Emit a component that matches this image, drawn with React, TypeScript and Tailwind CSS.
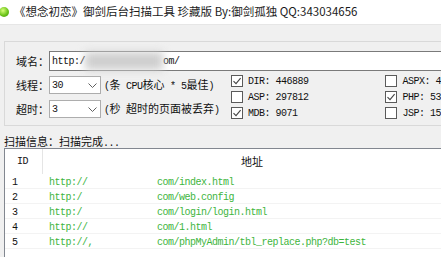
import React from "react";

const CJK = "font-['Noto_Sans_CJK_SC',sans-serif]";

function M({ children }: { children: React.ReactNode }) {
  return <span className="font-['Liberation_Mono',monospace] text-[10px] tracking-[-0.5px]">{children}</span>;
}

function Check({ checked }: { checked: boolean }) {
  return (
    <svg width="12" height="12" viewBox="0 0 12 12" className="shrink-0">
      <rect x="0.5" y="0.5" width="11" height="11" fill="#fff" stroke="#5a5a5a" />
      {checked && <path d="M2.5 6.2 L5 8.7 L9.6 3.2" fill="none" stroke="#444" strokeWidth="1.1" />}
    </svg>
  );
}

function Combo({ value }: { value: string }) {
  return (
    <div className="w-[52px] h-[18px] bg-white border border-[#adadad] flex items-center justify-between pl-[2px] pr-[3px]">
      <M>{value}</M>
      <svg width="9" height="5" viewBox="0 0 9 5">
        <polyline points="0.5,0.5 4.5,4.5 8.5,0.5" fill="none" stroke="#606060" />
      </svg>
    </div>
  );
}

function Opt({ checked, label }: { checked: boolean; label: string }) {
  return (
    <div className="h-[16px] flex items-center gap-[5px] whitespace-nowrap text-[#111]">
      <Check checked={checked} />
      <M>{label}</M>
    </div>
  );
}

const rows = [
  ["1", "http://", "com/index.html"],
  ["2", "http:/", "com/web.config"],
  ["3", "http:/", "com/login/login.html"],
  ["4", "http://", "com/1.html"],
  ["5", "http://,", "com/phpMyAdmin/tbl_replace.php?db=test"],
];

export default function App() {
  return (
    <div className={`w-[441px] h-[257px] overflow-hidden bg-[#f0f0f0] ${CJK} text-[11px] text-[#111]`}>
      {/* title bar */}
      <div className="h-[25px] bg-white border-b border-[#e6e6e6] flex items-center">
        <div className="w-[10px] h-[10px] -ml-[1px] rounded-full bg-[radial-gradient(circle_at_40%_35%,#d8ff7a,#6cc41a_55%,#3f8f0a)]" />
        <span className="ml-[5px] text-[11.5px] text-[#1a1a1a] whitespace-nowrap">
          《想念初恋》御剑后台扫描工具 珍藏版 By:御剑孤独 QQ:343034656
        </span>
      </div>

      {/* settings group */}
      <div className="mt-[16px] ml-[4px] w-[460px] h-[85px] border border-[#d9d9d9] pt-[9px]">
        <div className="flex items-center h-[20px] pl-[11px]">
          <span className="w-[33px]">域名：</span>
          <div className="flex-1 h-[20px] bg-white border border-[#7a7a7a] flex items-center pl-[2px]">
            <M>http:/</M>
            <span className="w-[78px] h-[18px] bg-[#cfcfcf] blur-[4px]" />
            <M>om/</M>
          </div>
        </div>
        <div className="flex mt-[2px]">
          <div className="w-[228px] pt-[3px] flex flex-col gap-[6px]">
            <div className="flex items-center h-[18px] pl-[11px] whitespace-nowrap">
              <span className="w-[33px]">线程：</span>
              <Combo value="30" />
              <span className="ml-[3px]">
                <M>(</M>条<M> CPU</M>核心<M> * 5</M>最佳<M>)</M>
              </span>
            </div>
            <div className="flex items-center h-[18px] pl-[11px] whitespace-nowrap">
              <span className="w-[33px]">超时：</span>
              <Combo value="3" />
              <span className="ml-[3px]">
                <M>(</M>秒<M> </M>超时的页面被丢弃<M>)</M>
              </span>
            </div>
          </div>
          <div className="w-[156px]">
            <Opt checked label="DIR: 446889" />
            <Opt checked={false} label="ASP: 297812" />
            <Opt checked label="MDB: 9071" />
          </div>
          <div>
            <Opt checked={false} label="ASPX: 45321" />
            <Opt checked label="PHP: 53012" />
            <Opt checked={false} label="JSP: 15487" />
          </div>
        </div>
      </div>

      {/* status */}
      <div className="mt-[8px] ml-[4px] h-[14px] leading-[14px]">
        扫描信息：扫描完成<M>...</M>
      </div>

      {/* result list */}
      <div className="ml-[4px] w-[460px] h-[120px] bg-white border border-[#828790]">
        <div className="h-[25px] flex items-center">
          <div className="w-[38px] h-full border-r border-[#e5e5e5] flex items-center pl-[12px]">
            <M>ID</M>
          </div>
          <div className="pl-[198px]">地址</div>
        </div>
        {rows.map(([id, a, b]) => (
          <div key={id} className="h-[15px] flex items-center border-b border-[#f3f3f3] whitespace-nowrap">
            <div className="w-[44px] pl-[7px]">
              <M>{id}</M>
            </div>
            <div className="w-[108px] text-[#3db53d]">
              <M>{a}</M>
            </div>
            <div className="text-[#3db53d]">
              <M>{b}</M>
            </div>
          </div>
        ))}
      </div>
    </div>
  );
}
